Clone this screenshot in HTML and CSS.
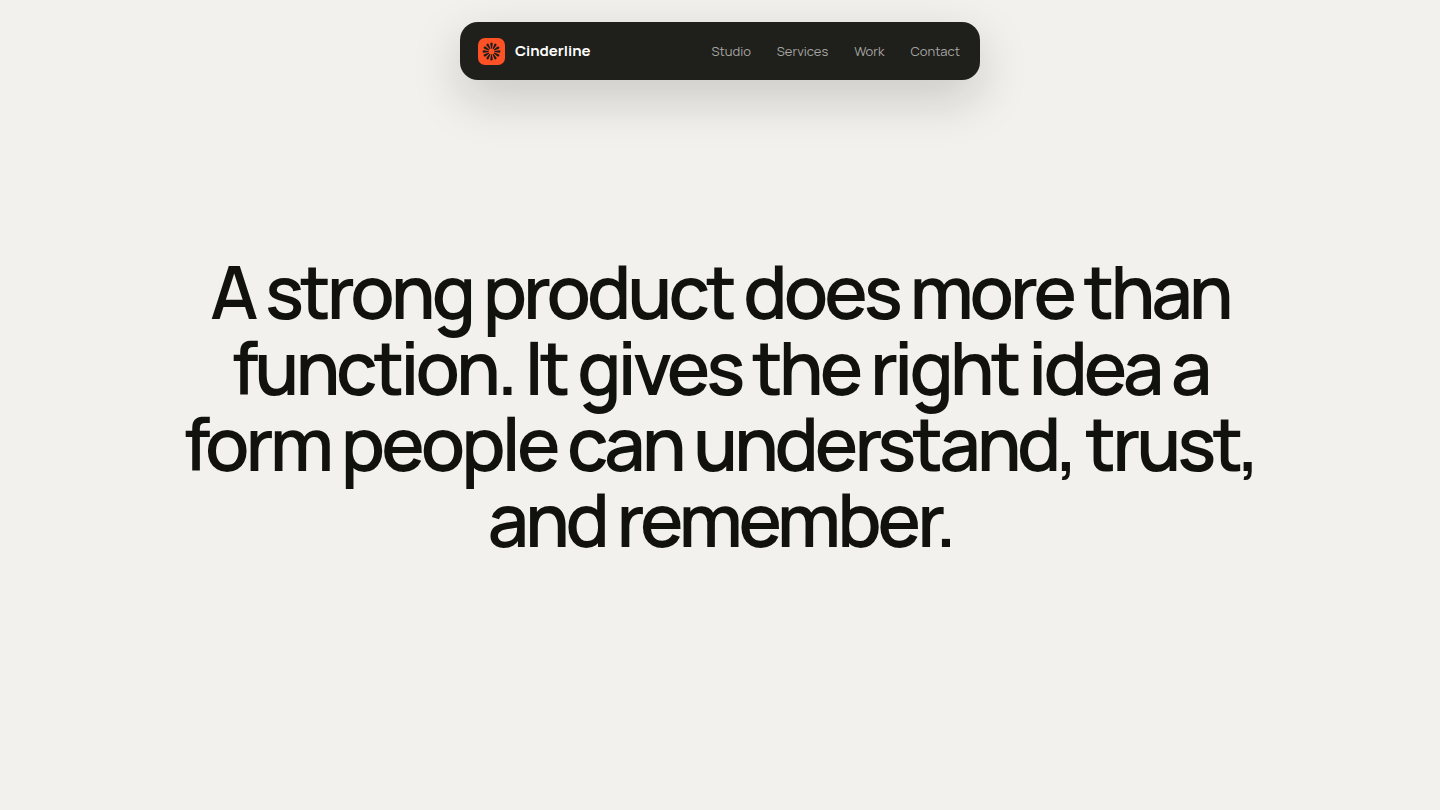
FILE: index.html
```html
<!DOCTYPE html>
<html lang="en">
  <head>
    <meta charset="UTF-8" />
    <meta name="viewport" content="width=device-width, initial-scale=1.0" />
    <title>Cinderline</title>
    <link rel="stylesheet" href="styles.css">
  </head>
  <body>
    <header class="site-header">
      <a class="brand" href="#">
        <svg class="brand-mark" viewBox="0 0 27 27" aria-hidden="true">
          <rect width="27" height="27" rx="7" fill="#ff5126" />
          <g fill="#1f1d19">
            <path id="ray" d="M13 10.6L12.3 5.8A1.2 1.2 0 0 1 14.7 5.8L14 10.6Z" />
            <use href="#ray" transform="rotate(30 13.5 13.5)" />
            <use href="#ray" transform="rotate(60 13.5 13.5)" />
            <use href="#ray" transform="rotate(90 13.5 13.5)" />
            <use href="#ray" transform="rotate(120 13.5 13.5)" />
            <use href="#ray" transform="rotate(150 13.5 13.5)" />
            <use href="#ray" transform="rotate(180 13.5 13.5)" />
            <use href="#ray" transform="rotate(210 13.5 13.5)" />
            <use href="#ray" transform="rotate(240 13.5 13.5)" />
            <use href="#ray" transform="rotate(270 13.5 13.5)" />
            <use href="#ray" transform="rotate(300 13.5 13.5)" />
            <use href="#ray" transform="rotate(330 13.5 13.5)" />
          </g>
        </svg>
        <span>Cinderline</span>
      </a>
      <nav class="site-nav">
        <a href="#">Studio</a>
        <a href="#">Services</a>
        <a href="#">Work</a>
        <a href="#">Contact</a>
      </nav>
    </header>

    <main class="statement">
      <h1>
        A strong product does more than
        function. It gives the right idea a
        form people can understand, trust,
        and remember.
      </h1>
    </main>
  </body>
</html>
```
FILE: styles.css
```css
* {
  box-sizing: border-box;
}
body {
  margin: 0;
  min-height: 100vh;
  display: flex;
  flex-direction: column;
  align-items: center;
  background: #f2f1ed;
  color: #11110e;
  font-family: Manrope, Inter, sans-serif;
}
a {
  color: inherit;
  text-decoration: none;
}

/* Header */
.site-header {
  display: flex;
  align-items: center;
  justify-content: space-between;
  width: 100%;
  max-width: 520px;
  margin-top: 22px;
  padding: 14px 20px 14px 18px;
  border-radius: 18px;
  background: #1f1f1c;
  box-shadow: 0 18px 50px rgba(17, 17, 14, 0.18);
}
.brand {
  display: flex;
  align-items: center;
  gap: 10px;
  color: #fff;
  font-size: 15px;
  line-height: 30px;
  font-weight: 700;
}
.brand-mark {
  width: 27px;
  height: 27px;
}
.site-nav {
  display: flex;
  gap: 26px;
  color: #a6a5a1;
  font-size: 13px;
  line-height: 30px;
}
.site-nav a:hover {
  color: #fff;
}

/* Statement */
.statement {
  flex: 1;
  display: flex;
  align-items: center;
  justify-content: center;
  padding-bottom: 80px;
  text-align: center;
}
h1 {
  max-width: 1120px;
  margin: 0;
  font-size: 73px;
  line-height: 76px;
  font-weight: 640;
  letter-spacing: -4px;
}
```
